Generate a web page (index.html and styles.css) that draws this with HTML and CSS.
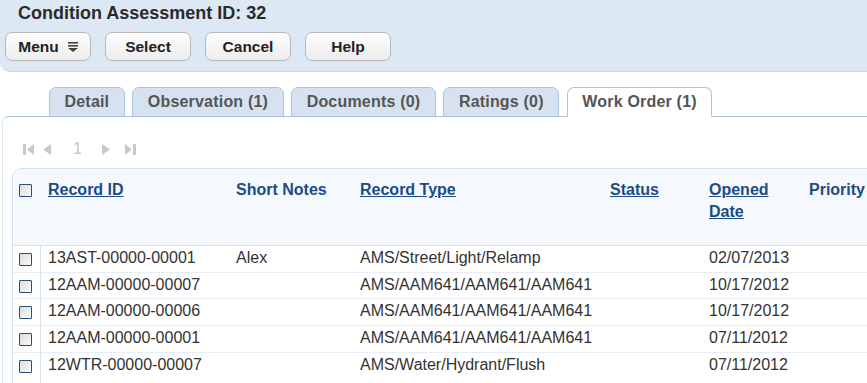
FILE: index.html
```html
<!DOCTYPE html>
<html lang="en">
<head>
    <meta charset="utf-8">
    <title>Condition Assessment</title>
    <link rel="stylesheet" href="styles.css">
</head>
<body>
    <div id="header">
        <div id="title">Condition Assessment ID: 32</div>
        <div id="actions">
            <button class="btn">Menu
                <svg class="menu-icon" width="10" height="10" viewBox="0 0 10 10">
                    <rect x="0" y="0" width="10" height="1.6" fill="#444"/>
                    <rect x="0" y="3" width="10" height="1.6" fill="#444"/>
                    <polygon points="0,6 10,6 5,10" fill="#444"/>
                </svg>
            </button>
            <button class="btn">Select</button>
            <button class="btn">Cancel</button>
            <button class="btn">Help</button>
        </div>
    </div>

    <div id="tabs">
        <div class="tab">Detail</div>
        <div class="tab">Observation (1)</div>
        <div class="tab">Documents (0)</div>
        <div class="tab">Ratings (0)</div>
        <div class="tab active">Work Order (1)</div>
    </div>

    <div id="panel">
        <div id="pager">
            <svg class="pg pg-first" width="11" height="11" viewBox="0 0 11 11">
                <rect x="0" y="0" width="3" height="11" fill="#c9c9c9"/>
                <polygon points="11,0 11,11 4,5.5" fill="#c9c9c9"/>
            </svg>
            <svg class="pg pg-prev" width="8" height="11" viewBox="0 0 8 11">
                <polygon points="8,0 8,11 0,5.5" fill="#c9c9c9"/>
            </svg>
            <span class="pg-num">1</span>
            <svg class="pg pg-next" width="8" height="11" viewBox="0 0 8 11">
                <polygon points="0,0 0,11 8,5.5" fill="#c9c9c9"/>
            </svg>
            <svg class="pg pg-last" width="11" height="11" viewBox="0 0 11 11">
                <polygon points="0,0 0,11 7,5.5" fill="#c9c9c9"/>
                <rect x="8" y="0" width="3" height="11" fill="#c9c9c9"/>
            </svg>
        </div>

        <div id="grid">
            <table>
                <colgroup>
                    <col style="width: 28px">
                    <col style="width: 188px">
                    <col style="width: 124px">
                    <col style="width: 250px">
                    <col style="width: 99px">
                    <col style="width: 100px">
                    <col style="width: 150px">
                </colgroup>
                <thead>
                    <tr class="head-row">
                        <th class="sel"><span class="cb"></span></th>
                        <th><a href="#">Record ID</a></th>
                        <th>Short Notes</th>
                        <th><a href="#">Record Type</a></th>
                        <th><a href="#">Status</a></th>
                        <th><a href="#">Opened Date</a></th>
                        <th>Priority</th>
                    </tr>
                </thead>
                <tbody>
                    <tr>
                        <td class="sel"><span class="cb"></span></td>
                        <td>13AST-00000-00001</td>
                        <td>Alex</td>
                        <td>AMS/Street/Light/Relamp</td>
                        <td></td>
                        <td>02/07/2013</td>
                        <td></td>
                    </tr>
                    <tr>
                        <td class="sel"><span class="cb"></span></td>
                        <td>12AAM-00000-00007</td>
                        <td></td>
                        <td>AMS/AAM641/AAM641/AAM641</td>
                        <td></td>
                        <td>10/17/2012</td>
                        <td></td>
                    </tr>
                    <tr>
                        <td class="sel"><span class="cb"></span></td>
                        <td>12AAM-00000-00006</td>
                        <td></td>
                        <td>AMS/AAM641/AAM641/AAM641</td>
                        <td></td>
                        <td>10/17/2012</td>
                        <td></td>
                    </tr>
                    <tr>
                        <td class="sel"><span class="cb"></span></td>
                        <td>12AAM-00000-00001</td>
                        <td></td>
                        <td>AMS/AAM641/AAM641/AAM641</td>
                        <td></td>
                        <td>07/11/2012</td>
                        <td></td>
                    </tr>
                    <tr>
                        <td class="sel"><span class="cb"></span></td>
                        <td>12WTR-00000-00007</td>
                        <td></td>
                        <td>AMS/Water/Hydrant/Flush</td>
                        <td></td>
                        <td>07/11/2012</td>
                        <td></td>
                    </tr>
                    <tr class="filler">
                        <td class="sel"></td>
                        <td colspan="6"></td>
                    </tr>
                </tbody>
            </table>
        </div>
    </div>
</body>
</html>
```

FILE: styles.css
```css
body {
    margin: 0;
    padding: 0;
    background-color: #fff;
    color: #333;
    font-family: 'Liberation Sans', Arial, sans-serif;
    width: 867px;
    height: 383px;
    overflow: hidden;
}

#header {
    box-sizing: border-box;
    height: 72px;
    padding-top: 2px;
    background-color: #dde8f5;
    border-bottom: 1px solid #c3d7ed;
    border-bottom-left-radius: 10px;
}

#title {
    padding-left: 18px;
    font-size: 18px;
    line-height: 22px;
    font-weight: bold;
    color: #2b2b2b;
}

#actions {
    display: flex;
    gap: 14px;
    margin-top: 8px;
    padding-left: 5px;
}

.btn {
    display: flex;
    align-items: center;
    justify-content: center;
    gap: 9px;
    width: 86px;
    height: 29px;
    padding: 0;
    border: 1px solid #b9b9b9;
    border-radius: 7px;
    background: linear-gradient(#fdfdfd, #ededed);
    font-family: inherit;
    font-size: 15.5px;
    font-weight: bold;
    color: #222;
}

.menu-icon {
    display: block;
}

#tabs {
    position: relative;
    z-index: 1;
    display: flex;
    gap: 7.5px;
    margin-top: 15px;
    margin-bottom: -1px;
    padding-left: 49px;
}

.tab {
    padding: 0 14.5px;
    line-height: 28px;
    border: 1px solid #a9c4e0;
    border-radius: 7px 7px 0 0;
    background-color: #d6e2ef;
    font-size: 16px;
    font-weight: bold;
    letter-spacing: 0.2px;
    color: #555;
}

.tab.active {
    background-color: #fff;
    border-bottom-color: #fff;
}

#panel {
    margin-left: 2px;
    padding-top: 23px;
    border-top: 1px solid #a9c4e0;
    border-left: 1px solid #e3e6ea;
    border-top-left-radius: 7px;
}

#pager {
    display: flex;
    align-items: center;
    height: 18px;
    padding-left: 20px;
}

.pg {
    display: block;
}

.pg-first { margin-right: 9px; }
.pg-prev { margin-right: 22px; }
.pg-next { margin-right: 15px; }

.pg-num {
    margin-right: 20px;
    font-size: 16px;
    line-height: 18px;
    color: #c4c4c4;
}

#grid {
    box-sizing: border-box;
    width: 855px;
    height: 215px;
    margin-top: 10px;
    margin-left: 9px;
    border-top: 1px solid #d5e3f1;
    border-left: 1px solid #d5e3f1;
    border-top-left-radius: 9px;
    overflow: hidden;
}

table {
    table-layout: fixed;
    width: 939px;
    border-spacing: 0;
}

th {
    padding: 10px 7px 0;
    vertical-align: top;
    text-align: left;
    font-size: 16px;
    line-height: 21.5px;
    font-weight: bold;
    color: #1d4b84;
    background-color: #f5f9fd;
    border-bottom: 1px solid #d5e3f1;
}

th a {
    color: #1d4b84;
    text-decoration: underline;
}

.head-row {
    height: 77px;
}

td {
    padding: 3px 7px 0;
    vertical-align: top;
    font-size: 16px;
    line-height: 18px;
    color: #333;
    border-bottom: 1px solid #e6edf4;
    white-space: nowrap;
}

tbody tr {
    height: 26.67px;
}

tbody tr:nth-last-child(2) td,
.filler td {
    border-bottom: none;
}

th.sel,
td.sel {
    padding-left: 6px;
    padding-right: 0;
}

td.sel {
    border-right: 1px solid #d5e3f1;
}

.cb {
    display: block;
    box-sizing: border-box;
    width: 13px;
    height: 13px;
    margin-top: 4px;
    border: 1px solid #234f7e;
    border-radius: 1px;
    background: linear-gradient(135deg, #dcdcdc, #fbfbfb);
}

th .cb {
    margin-top: 5px;
}
```
